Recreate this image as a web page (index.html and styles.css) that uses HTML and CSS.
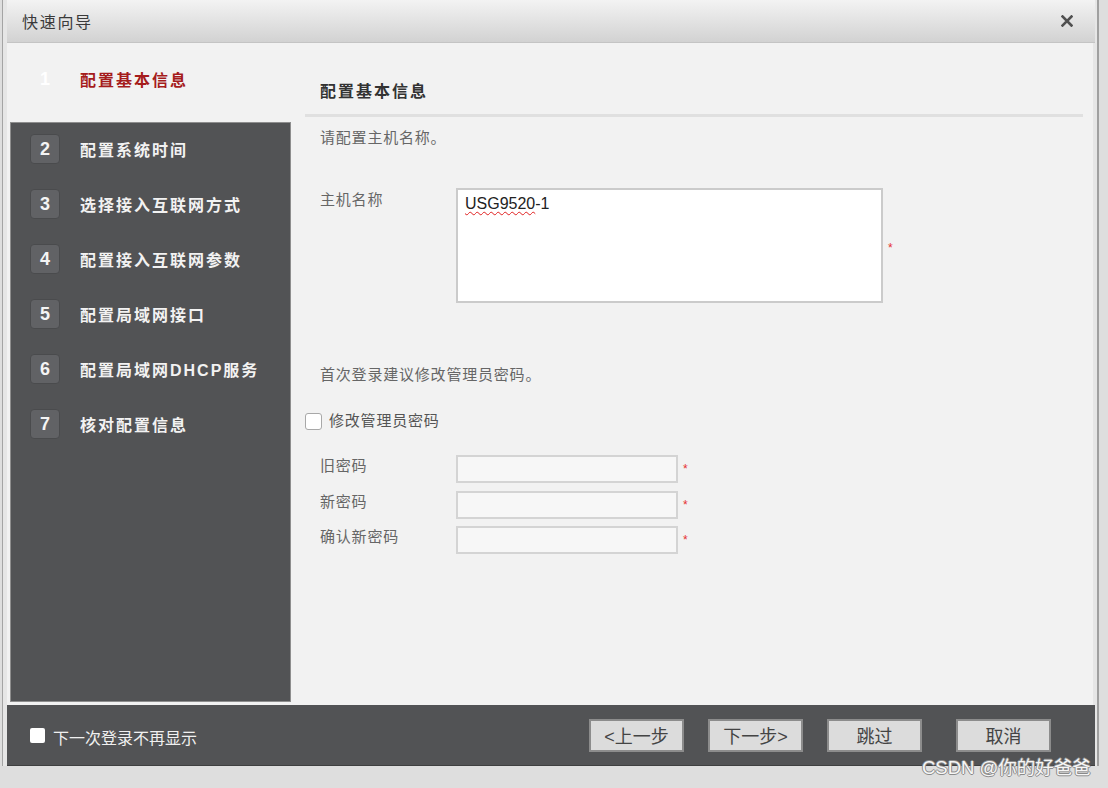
FILE: index.html
```html
<!DOCTYPE html>
<html lang="zh-CN">
<head>
<meta charset="utf-8">
<title>快速向导</title>
<link rel="stylesheet" href="styles.css">
</head>
<body>
<div class="dialog">
  <div class="titlebar">
    <span class="title">快速向导</span>
    <svg class="close" width="12" height="12" viewBox="0 0 12 12"><path d="M1.5 1.5 L10.5 10.5 M10.5 1.5 L1.5 10.5" stroke="#505050" stroke-width="2.6" stroke-linecap="square"/></svg>
  </div>
  <div class="body">
    <div class="side">
      <div class="step active"><span class="num">1</span><span class="label">配置基本信息</span></div>
      <div class="steps">
        <div class="step"><span class="num badge">2</span><span class="label">配置系统时间</span></div>
        <div class="step"><span class="num badge">3</span><span class="label">选择接入互联网方式</span></div>
        <div class="step"><span class="num badge">4</span><span class="label">配置接入互联网参数</span></div>
        <div class="step"><span class="num badge">5</span><span class="label">配置局域网接口</span></div>
        <div class="step"><span class="num badge">6</span><span class="label">配置局域网DHCP服务</span></div>
        <div class="step"><span class="num badge">7</span><span class="label">核对配置信息</span></div>
      </div>
    </div>
    <div class="main">
      <div class="heading">配置基本信息</div>
      <div class="text intro">请配置主机名称。</div>
      <div class="row host">
        <span class="text flabel">主机名称</span>
        <div class="textarea"><span class="spell">USG9520</span>-1</div>
        <span class="req mid">*</span>
      </div>
      <div class="text advice">首次登录建议修改管理员密码。</div>
      <div class="check-row">
        <span class="checkbox"></span><span class="text chk-label">修改管理员密码</span>
      </div>
      <div class="pw">
        <div class="row"><span class="text flabel">旧密码</span><span class="input"></span><span class="req">*</span></div>
        <div class="row"><span class="text flabel">新密码</span><span class="input"></span><span class="req">*</span></div>
        <div class="row"><span class="text flabel">确认新密码</span><span class="input"></span><span class="req">*</span></div>
      </div>
    </div>
  </div>
  <div class="footer">
    <div class="nomore"><span class="fcheck"></span><span class="ftext">下一次登录不再显示</span></div>
    <div class="buttons">
      <button class="btn">&lt;上一步</button>
      <button class="btn">下一步&gt;</button>
      <button class="btn">跳过</button>
      <button class="btn last">取消</button>
    </div>
  </div>
</div>
<div class="watermark">CSDN @你的好爸爸</div>
</body>
</html>
```

FILE: styles.css
```css
html, body {
  margin: 0;
  padding: 0;
}
body {
  width: 1108px;
  height: 788px;
  background: #dedede;
  font-family: "Liberation Sans", "Noto Sans CJK SC", sans-serif;
  position: relative;
  overflow: hidden;
}
.dialog {
  margin-left: 2px;
  width: 1086px;
  height: 766px;
  border-left: 1px solid #a4a4a4;
  border-right: 2px solid #a0a0a0;
  padding: 0 4px;
  background: #e6e6e6;
  display: flex;
  flex-direction: column;
}
.titlebar {
  height: 42px;
  border-bottom: 1px solid #c4c4c4;
  background: linear-gradient(#f3f3f3, #d2d2d2);
  display: flex;
  align-items: center;
  justify-content: space-between;
  padding: 0 22px 0 15px;
  margin-right: -2px;
}
.title {
  font-size: 16px;
  letter-spacing: 1.7px;
  color: #3a3a3a;
}
.close {
  display: block;
}
.body {
  height: 662px;
  display: flex;
  background: #f2f2f2;
}
.side {
  width: 284px;
  display: flex;
  flex-direction: column;
}
.step {
  display: flex;
  align-items: center;
  height: 30px;
}
.step .num {
  width: 30px;
  height: 30px;
  display: flex;
  align-items: center;
  justify-content: center;
  font-weight: 700;
  font-size: 18px;
  color: #f4f4f4;
  box-sizing: border-box;
}
.step .label {
  margin-left: 20px;
  font-size: 16px;
  font-weight: 700;
  letter-spacing: 2px;
  color: #f2f2f2;
}
.step.active {
  height: 79px;
  padding-left: 23px;
  padding-bottom: 7px;
  box-sizing: border-box;
}
.step.active .label {
  color: #a51c1c;
}
.step.active .num {
  color: #ffffff;
}
.steps {
  flex: 1;
  margin: 0 0 3px 3px;
  background: #525355;
  border: 1px solid #8e8e8e;
  padding: 11px 0 0 19px;
  display: flex;
  flex-direction: column;
  gap: 25px;
}
.badge {
  background: #616265;
  border: 1px solid #4a4b4d;
  border-radius: 4px;
}
.main {
  flex: 1;
  padding: 0 10px 0 14px;
}
.heading {
  height: 74px;
  box-sizing: border-box;
  padding: 39px 0 0 15px;
  line-height: 20px;
  font-size: 16px;
  font-weight: 700;
  letter-spacing: 2px;
  color: #333;
  border-bottom: 3px solid #e0e0e0;
}
.text {
  font-size: 15px;
  line-height: 20px;
  letter-spacing: 0.8px;
  color: #666;
}
.intro {
  margin-top: 11px;
  padding-left: 15px;
}
.row {
  display: flex;
  align-items: flex-start;
  padding-left: 15px;
}
.host {
  margin-top: 40px;
  align-items: center;
}
.host .flabel {
  align-self: flex-start;
  padding-top: 2px;
}
.flabel {
  width: 136px;
  flex: none;
  padding-top: 1px;
}
.textarea {
  width: 427px;
  height: 115px;
  box-sizing: border-box;
  border: 2px solid #cbcbcb;
  background: #fff;
  padding: 5px 7px;
  font-size: 16px;
  line-height: 18px;
  color: #222;
}
.spell {
  text-decoration: underline wavy #e02020;
  text-decoration-thickness: 1px;
  text-underline-offset: 2px;
}
.req {
  color: #e63030;
  font-size: 12px;
  margin-left: 5px;
  line-height: 28px;
}
.req.mid {
  line-height: 14px;
  padding-top: 4px;
}
.advice {
  margin-top: 62px;
  padding-left: 15px;
}
.check-row {
  margin-top: 26px;
  display: flex;
  align-items: center;
  height: 20px;
}
.checkbox {
  width: 17px;
  height: 17px;
  box-sizing: border-box;
  border: 1px solid #a8a8a8;
  border-radius: 3px;
  background: #fff;
}
.chk-label {
  margin-left: 7px;
  color: #555;
}
.pw {
  margin-top: 24px;
  display: flex;
  flex-direction: column;
  gap: 7.5px;
}
.input {
  width: 222px;
  height: 28px;
  box-sizing: border-box;
  border: 2px solid #d4d4d4;
  background: #f7f7f7;
}
.footer {
  height: 61px;
  box-sizing: border-box;
  background: #525355;
  border-bottom: 1px solid #3e3f40;
  display: flex;
  align-items: center;
  justify-content: space-between;
  padding: 0 44px 0 23px;
  margin-right: -2px;
}
.nomore {
  display: flex;
  align-items: center;
  padding-top: 3px;
}
.fcheck {
  width: 15px;
  height: 15px;
  background: #fff;
  border-radius: 2px;
  margin-top: -3px;
}
.ftext {
  margin-left: 8px;
  font-size: 16px;
  color: #f0f0f0;
}
.buttons {
  display: flex;
  gap: 24px;
}
.btn {
  width: 95px;
  height: 33px;
  box-sizing: border-box;
  background: #dcdcdc;
  border: 2px solid #8c8c8c;
  font-family: "Liberation Sans", "Noto Sans CJK SC", sans-serif;
  font-size: 18px;
  color: #444;
  padding: 0;
}
.btn.last {
  margin-left: 10px;
}
.watermark {
  position: absolute;
  left: 922px;
  top: 756px;
  font-size: 18.5px;
  line-height: 24px;
  color: #f6f6f6;
  text-shadow: 1px 0 #8a8a8a, -1px 0 #8a8a8a, 0 1px #8a8a8a, 0 -1px #8a8a8a;
}
```
